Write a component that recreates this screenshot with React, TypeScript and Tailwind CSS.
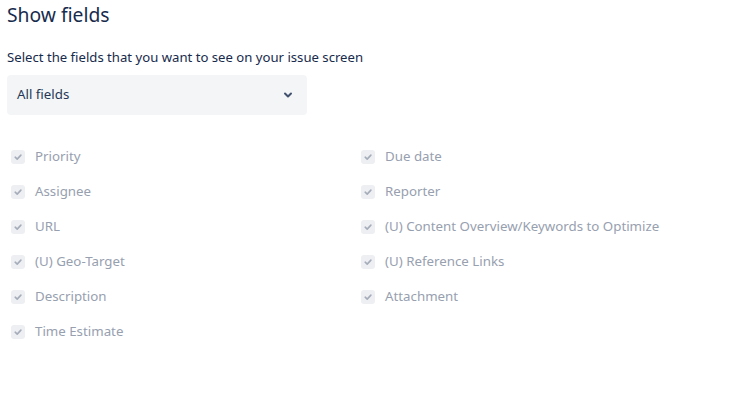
import React from "react";

const left = ["Priority", "Assignee", "URL", "(U) Geo-Target", "Description", "Time Estimate"];
const right = ["Due date", "Reporter", "(U) Content Overview/Keywords to Optimize", "(U) Reference Links", "Attachment"];

function Item({ label }: { label: string }) {
  return (
    <div className="flex h-[35px] items-center">
      <div className="ml-[4px] mr-[10px] flex h-[14px] w-[14px] items-center justify-center rounded-[3px] bg-[#EEEFF2]">
        <svg width="10" height="10" viewBox="0 0 10 10">
          <path d="M2.2 5.2 L4.2 7.1 L7.9 3.1" fill="none" stroke="#A5ADBA" strokeWidth="1.6" strokeLinecap="round" strokeLinejoin="round" />
        </svg>
      </div>
      <span className="text-[13.3px] text-[#97A0AF]">{label}</span>
    </div>
  );
}

export default function App() {
  return (
    <div className="h-[403px] w-[750px] bg-white pl-[7px] pt-[2px]" style={{ fontFamily: '"Noto Sans", "Open Sans", sans-serif' }}>
      <h1 className="text-[19.3px] leading-[26px] text-[#172B4D]">Show fields</h1>
      <p className="mt-[20px] text-[13.15px] leading-[18px] text-[#172B4D]">Select the fields that you want to see on your issue screen</p>
      <div className="mt-[9px] flex h-[40px] w-[300px] items-center justify-between rounded-[4px] bg-[#F4F5F7] pl-[10px] pr-[14px]">
        <span className="text-[13.3px] text-[#253858]">All fields</span>
        <svg width="10" height="8" viewBox="0 0 10 8">
          <path d="M2 2.5 L5 5.5 L8 2.5" fill="none" stroke="#42526E" strokeWidth="2" strokeLinecap="round" strokeLinejoin="round" />
        </svg>
      </div>
      <div className="mt-[24px] flex">
        <div className="w-[350px]">
          {left.map((l) => (
            <Item key={l} label={l} />
          ))}
        </div>
        <div>
          {right.map((l) => (
            <Item key={l} label={l} />
          ))}
        </div>
      </div>
    </div>
  );
}
